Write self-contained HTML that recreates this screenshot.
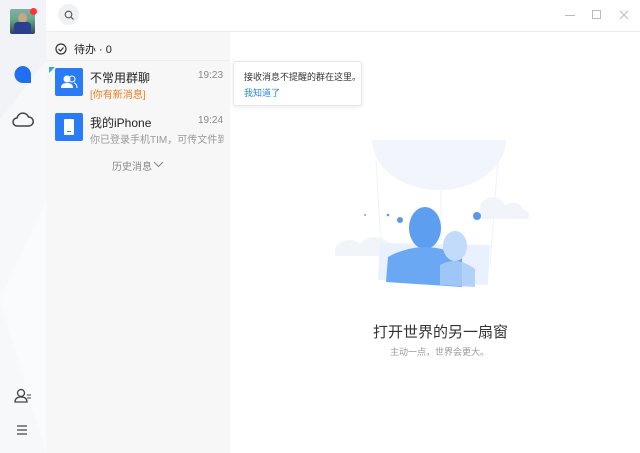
<!DOCTYPE html>
<html><head><meta charset="utf-8">
<style>
*{margin:0;padding:0;box-sizing:border-box}
body{width:640px;height:453px;overflow:hidden;font-family:"Liberation Sans","Noto Sans CJK SC",sans-serif;background:#fff;position:relative}
.side{position:absolute;left:0;top:0;width:46px;height:453px;background:#f1f3f7;overflow:hidden}
.list{position:absolute;left:46px;top:32px;width:184px;height:421px;background:#f7f7f8}
.top{position:absolute;left:46px;top:0;width:594px;height:32px;background:#fff;border-bottom:1px solid #ececec}
.abs{position:absolute}
.row{position:absolute;left:0;width:184px;height:50px}
.ic{position:absolute;left:9px;top:6px;width:28px;height:28px;background:#2a7cf6;border-radius:2px}
.name{position:absolute;left:44px;top:7px;font-size:12px;color:#222}
.time{position:absolute;left:152px;top:8px;font-size:10px;color:#888}
.sub{position:absolute;left:44px;top:24px;font-size:10px;color:#999;white-space:nowrap;width:134px;overflow:hidden}
</style></head><body>
<div class="side">
<svg class="abs" style="left:0;top:0" width="46" height="453"><polygon points="0,120 46,60 46,453 0,453" fill="#f7f8fa"/><polygon points="0,300 46,200 46,453" fill="#fafbfc"/></svg>
<div class="abs" style="left:10px;top:9px;width:25px;height:25px;background:linear-gradient(#8aa 0,#6a8 40%,#345 100%);border-radius:2px"></div>
<div class="abs" style="left:18px;top:13px;width:9px;height:10px;background:#c9a58a;border-radius:50%"></div>
<div class="abs" style="left:14px;top:22px;width:17px;height:12px;background:#2b3f8f;border-radius:4px 4px 0 0"></div>
<div class="abs" style="left:30px;top:8px;width:7px;height:7px;background:#f33;border-radius:50%"></div>
<svg class="abs" style="left:13px;top:65px" width="20" height="20"><path d="M10 1a8.5 8.5 0 1 0 0 17h8v-8A8.5 8.5 0 0 0 10 1z" fill="#1f6ff0"/></svg>
<svg class="abs" style="left:11px;top:111px" width="24" height="18"><path d="M6 15a4 4 0 0 1 0-8a6 6 0 0 1 11.5-1a4.5 4.5 0 0 1 0.5 9z" fill="none" stroke="#444" stroke-width="1.5"/></svg>
<svg class="abs" style="left:14px;top:388px" width="18" height="16"><circle cx="7" cy="5" r="3.5" fill="none" stroke="#444" stroke-width="1.3"/><path d="M1 14c0-4 3-5 6-5s6 1 6 5z" fill="none" stroke="#444" stroke-width="1.3"/><path d="M13 7h4M13 10h4" stroke="#444"/></svg>
<svg class="abs" style="left:16px;top:424px" width="12" height="12"><path d="M1 2h10M1 6h10M1 10h10" stroke="#444" stroke-width="1.3"/></svg>
</div>
<div class="top">
<div class="abs" style="left:12px;top:4px;width:21px;height:21px;border-radius:50%;background:#f0f1f3"></div>
<svg class="abs" style="left:18px;top:10px" width="10" height="10"><circle cx="4.5" cy="4.5" r="3.3" fill="none" stroke="#555" stroke-width="1.1"/><path d="M7 7l2.5 2.5" stroke="#555" stroke-width="1.1"/></svg>
<div class="abs" style="left:519px;top:15px;width:10px;height:1px;background:#bbb"></div>
<div class="abs" style="left:546px;top:10px;width:9px;height:9px;border:1px solid #bbb"></div>
<svg class="abs" style="left:573px;top:10px" width="10" height="10"><path d="M1 1l8 8M9 1l-8 8" stroke="#bbb"/></svg>
</div>
<div class="list">
<svg class="abs" style="left:9px;top:11px" width="12" height="12"><circle cx="6" cy="6" r="5" fill="none" stroke="#333" stroke-width="1.2"/><path d="M3.5 6l2 2 3-3.5" fill="none" stroke="#333" stroke-width="1.2"/></svg>
<div class="abs" style="left:28px;top:9px;font-size:11px;color:#222">待办 · 0</div>
<div class="abs" style="left:0;top:28px;width:184px;height:1px;background:#eee"></div>
<div class="row" style="top:30px">
<svg class="abs" style="left:3px;top:5px" width="6" height="6"><path d="M0 0h6L0 6z" fill="#38a3e8"/></svg>
<div class="ic"><svg width="28" height="28"><circle cx="12" cy="11" r="3.5" fill="#fff"/><path d="M6 20c0-4 3-5 6-5s6 1 6 5z" fill="#fff"/><circle cx="17" cy="11" r="3" fill="none" stroke="#fff"/><path d="M19 15c2 .5 3 2 3 5" fill="none" stroke="#fff"/></svg></div>
<div class="name">不常用群聊</div><div class="time">19:23</div>
<div class="sub" style="color:#f07a1a">[你有新消息]</div>
</div>
<div class="row" style="top:75px">
<div class="ic"><div class="abs" style="left:9px;top:6px;width:10px;height:16px;background:#fff;border-radius:1px"></div><div class="abs" style="left:12px;top:18px;width:4px;height:1px;background:#2a7cf6"></div></div>
<div class="name">我的iPhone</div><div class="time">19:24</div>
<div class="sub">你已登录手机TIM，可传文件到手机</div>
</div>
<div class="abs" style="left:66px;top:126px;font-size:10px;color:#888">历史消息</div>
<svg class="abs" style="left:107px;top:129px" width="11" height="7"><path d="M1 1l4.5 4.5L10 1" fill="none" stroke="#888"/></svg>
</div>
<div class="abs" style="left:233px;top:61px;width:129px;height:45px;background:#fff;border:1px solid #e6e6e6;border-radius:3px;box-shadow:0 1px 4px rgba(0,0,0,.08)"></div>
<div class="abs" style="left:244px;top:70px;font-size:9px;color:#333">接收消息不提醒的群在这里。</div>
<div class="abs" style="left:244px;top:86px;font-size:9px;color:#2a86e8">我知道了</div>
<svg class="abs" style="left:330px;top:140px" width="220" height="160">
<path d="M42 0a67 50 0 0 0 134 0z" fill="#f2f6fc"/>
<path d="M46 20L52 125M168 20L160 125M111 50V100" stroke="#eef2f7" stroke-width="1"/>
<path d="M5 110a14 10 0 0 1 25-6a16 12 0 0 1 30 2a8 6 0 0 1 0 10H5z" fill="#f1f4f8"/>
<path d="M150 70a12 10 0 0 1 25-4a10 8 0 0 1 18 4a6 5 0 0 1 4 9H150z" fill="#f1f4f8"/>
<path d="M48 140l110 5 2-40-110-2z" fill="#e8f1fd"/>
<ellipse cx="95" cy="88" rx="16" ry="21" fill="#5d9ef0"/>
<path d="M56 142l2-25c10-6 25-10 37-10s27 4 37 10v30z" fill="#6aa8f4"/>
<ellipse cx="125" cy="106" rx="12" ry="15" fill="#c2dbfa"/>
<path d="M110 145v-20c6-3 10-4 15-4s12 2 20 8v18z" fill="#a7cbf6" opacity=".85"/>
<circle cx="70" cy="80" r="3" fill="#5a98ec"/><circle cx="147" cy="76" r="4" fill="#5a98ec"/><circle cx="58" cy="75" r="1.3" fill="#5a98ec"/><circle cx="35" cy="75" r="1" fill="#99b"/>
</svg>
<div class="abs" style="left:373px;top:321px;font-size:15px;color:#333">打开世界的另一扇窗</div>
<div class="abs" style="left:390px;top:345px;font-size:9px;color:#999">主动一点，世界会更大。</div>
</body></html>
